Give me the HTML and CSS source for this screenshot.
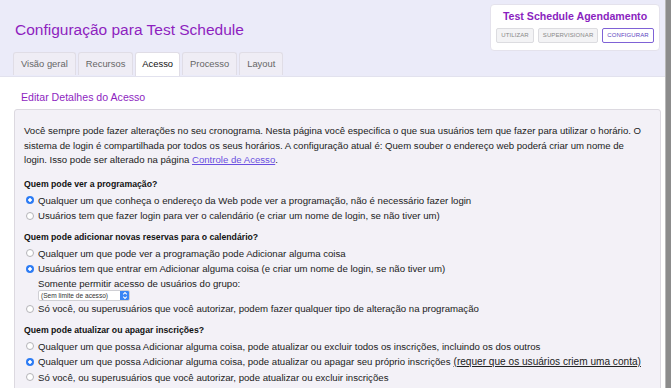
FILE: index.html
```html
<!DOCTYPE html>
<html lang="pt">
<head>
<meta charset="utf-8">
<title>Configuração para Test Schedule</title>
<link rel="stylesheet" href="styles.css">
</head>
<body>
<div class="frame">
  <div class="main">
    <header class="header">
      <div class="header-left">
        <h1 class="title">Configuração para Test Schedule</h1>
        <nav class="tabs">
          <span class="tab">Visão geral</span>
          <span class="tab">Recursos</span>
          <span class="tab active">Acesso</span>
          <span class="tab">Processo</span>
          <span class="tab">Layout</span>
        </nav>
      </div>
      <div class="modebox">
        <div class="modebox-title">Test Schedule Agendamento</div>
        <div class="modebox-buttons">
          <span class="mode-btn">Utilizar</span>
          <span class="mode-btn">Supervisionar</span>
          <span class="mode-btn current">Configurar</span>
        </div>
      </div>
    </header>
    <section class="content">
      <h2 class="section-title">Editar Detalhes do Acesso</h2>
      <div class="panel">
        <p class="intro">Você sempre pode fazer alterações no seu cronograma. Nesta página você especifica o que sua usuários tem que fazer para utilizar o horário. O sistema de login é compartilhada por todos os seus horários. A configuração atual é: Quem souber o endereço web poderá criar um nome de login. Isso pode ser alterado na página <a class="link" href="#">Controle de Acesso</a>.</p>

        <div class="group">
          <div class="question">Quem pode ver a programação?</div>
          <div class="option"><span class="radio checked"></span>Qualquer um que conheça o endereço da Web pode ver a programação, não é necessário fazer login</div>
          <div class="option"><span class="radio"></span>Usuários tem que fazer login para ver o calendário (e criar um nome de login, se não tiver um)</div>
        </div>

        <div class="group">
          <div class="question">Quem pode adicionar novas reservas para o calendário?</div>
          <div class="option"><span class="radio"></span>Qualquer um que pode ver a programação pode Adicionar alguma coisa</div>
          <div class="option"><span class="radio checked"></span>Usuários tem que entrar em Adicionar alguma coisa (e criar um nome de login, se não tiver um)</div>
          <div class="sub">Somente permitir acesso de usuários do grupo:</div>
          <div class="select-row">
            <span class="select"><span class="select-text">(Sem limite de acesso)</span><span class="select-arrow"><svg width="6" height="9" viewBox="0 0 6 9"><path d="M1.2 3.4 L3 1.6 L4.8 3.4 M1.2 5.6 L3 7.4 L4.8 5.6" fill="none" stroke="#fff" stroke-width="1.1"/></svg></span></span>
          </div>
          <div class="option"><span class="radio"></span>Só você, ou superusuários que você autorizar, podem fazer qualquer tipo de alteração na programação</div>
        </div>

        <div class="group">
          <div class="question">Quem pode atualizar ou apagar inscrições?</div>
          <div class="option"><span class="radio"></span>Qualquer um que possa Adicionar alguma coisa, pode atualizar ou excluir todos os inscrições, incluindo os dos outros</div>
          <div class="option"><span class="radio checked"></span>Qualquer um que possa Adicionar alguma coisa, pode atualizar ou apagar seu próprio inscrições <span class="note">(requer que os usuários criem uma conta)</span></div>
          <div class="option"><span class="radio"></span>Só você, ou superusuários que você autorizar, pode atualizar ou excluir inscrições</div>
        </div>
      </div>
    </section>
  </div>
  <div class="scrollbar"></div>
</div>
</body>
</html>
```
FILE: styles.css
```css
html, body {
  margin: 0;
  padding: 0;
  height: 100%;
  overflow: hidden;
}
body {
  font-family: "Liberation Sans", Arial, sans-serif;
  color: #222;
  background: #fff;
}
.frame {
  display: flex;
  height: 388px;
  width: 671px;
  overflow: hidden;
}
.main {
  flex: 1;
  min-width: 0;
  background: #fff;
}
.scrollbar {
  width: 5px;
  background: #8c8c8c;
  border-left: 1px solid #b8b8b8;
}

/* header */
.header {
  background: #ebebf9;
  height: 77px;
  display: flex;
  justify-content: space-between;
  align-items: flex-start;
  border-bottom: 1px solid #e2e2ee;
  box-sizing: border-box;
}
.header-left {
  display: flex;
  flex-direction: column;
  justify-content: space-between;
  height: 100%;
  padding-left: 13px;
}
.title {
  margin: 20px 0 0 2px;
  font-size: 15.5px;
  font-weight: normal;
  color: #8e1fbf;
  line-height: 20px;
}
.tabs {
  display: flex;
  gap: 2px;
}
.tab {
  display: block;
  height: 22px;
  line-height: 22px;
  padding: 0 7px;
  font-size: 9.4px;
  color: #666;
  background: #efedf5;
  border: 1px solid #e0dde6;
  border-bottom: none;
  border-radius: 3px 3px 0 0;
}
.tab.active {
  background: #fff;
  color: #111;
  height: 23px;
  padding: 0 6px;
}

.modebox {
  margin: 4px 5px 0 0;
  width: 170px;
  height: 47px;
  box-sizing: border-box;
  background: #fff;
  border: 1px solid #e4e2ec;
  border-radius: 4px;
  padding: 4px 5px 0;
  display: flex;
  flex-direction: column;
  align-items: center;
}
.modebox-title {
  font-size: 10.6px;
  font-weight: bold;
  color: #8a1fc0;
  line-height: 14px;
}
.modebox-buttons {
  display: flex;
  gap: 4px;
  margin-top: 5px;
}
.mode-btn {
  display: block;
  height: 15px;
  line-height: 13px;
  box-sizing: border-box;
  padding: 0 4px;
  font-size: 6px;
  text-transform: uppercase;
  color: #888;
  background: #f3f3f5;
  border: 1px solid #dcdce0;
  border-radius: 2px;
  letter-spacing: 0.1px;
}
.mode-btn.current {
  background: #fff;
  color: #5b3fc0;
  border-color: #7f62d6;
}

/* content */
.content {
  padding: 0 4px 0 14px;
}
.section-title {
  margin: 0;
  padding: 13px 0 0 7px;
  height: 19px;
  font-size: 10.6px;
  font-weight: normal;
  color: #8e1fbf;
  line-height: 14px;
}
.panel {
  background: #f3f1f7;
  border: 1px solid #dcd9e0;
  border-radius: 3px;
  padding: 14px 8px 20px 9px;
  height: 300px;
}
.intro {
  margin: 0 0 10px 0;
  max-width: 619px;
  font-size: 9.6px;
  line-height: 14.5px;
  color: #222;
}
.link {
  color: #6a4fe0;
  text-decoration: underline;
}
.group {
  margin-bottom: 7px;
}
.question {
  font-size: 8.7px;
  font-weight: bold;
  line-height: 13px;
  margin-bottom: 2px;
  color: #111;
}
.option {
  display: flex;
  align-items: center;
  font-size: 9.65px;
  line-height: 15.5px;
  color: #222;
  white-space: nowrap;
}
.radio {
  flex: none;
  width: 8px;
  height: 8px;
  box-sizing: border-box;
  border-radius: 50%;
  background: #fff;
  border: 1px solid #b4b4b8;
  margin: 0 4px 0 2px;
}
.radio.checked {
  border: none;
  background: radial-gradient(circle, #fff 0 1.5px, #2d7cf4 1.9px);
}
.note {
  font-size: 10.1px;
  text-decoration: underline;
  margin-left: 3px;
}
.sub {
  font-size: 9.65px;
  line-height: 13.5px;
  padding-left: 14px;
  color: #222;
}
.select-row {
  padding-left: 14px;
  height: 11px;
  display: flex;
  align-items: center;
}
.select {
  display: flex;
  align-items: stretch;
  width: 92px;
  height: 11px;
  box-sizing: border-box;
  background: #fff;
  border: 1px solid #cfcfd4;
  border-radius: 2px;
  overflow: hidden;
}
.select-text {
  flex: 1;
  font-size: 6.6px;
  line-height: 9px;
  padding-left: 2px;
  color: #333;
  white-space: nowrap;
}
.select-arrow {
  width: 9px;
  background: #3a86f5;
  display: flex;
  align-items: center;
  justify-content: center;
}
```
